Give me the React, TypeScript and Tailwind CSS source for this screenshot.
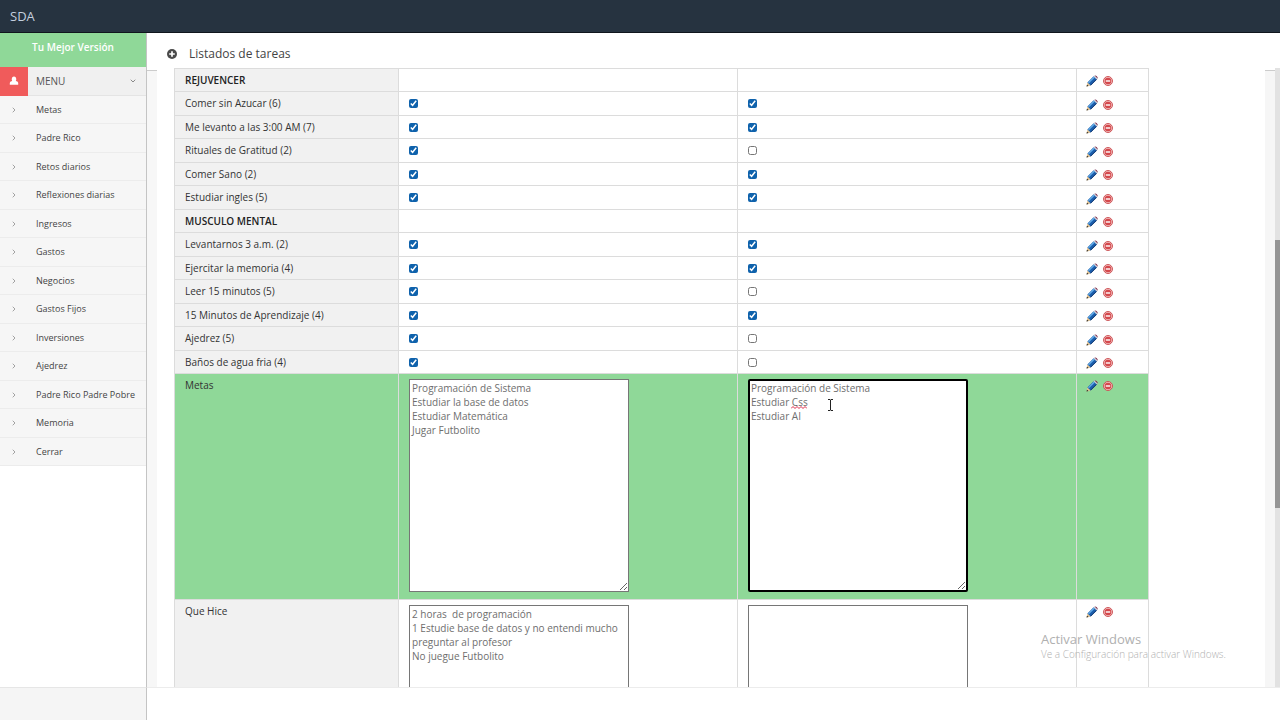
import React, { useState } from 'react';
import { ChevronDown, ChevronRight } from 'lucide-react';

interface Task {
  name: string;
  heading?: boolean;
  today?: boolean;
  tomorrow?: boolean;
}

const MENU_ITEMS = [
  'Metas',
  'Padre Rico',
  'Retos diarios',
  'Reflexiones diarias',
  'Ingresos',
  'Gastos',
  'Negocios',
  'Gastos Fijos',
  'Inversiones',
  'Ajedrez',
  'Padre Rico Padre Pobre',
  'Memoria',
  'Cerrar',
];

const TASKS: Task[] = [
  { name: 'REJUVENCER', heading: true },
  { name: 'Comer sin Azucar (6)', today: true, tomorrow: true },
  { name: 'Me levanto a las 3:00 AM (7)', today: true, tomorrow: true },
  { name: 'Rituales de Gratitud (2)', today: true, tomorrow: false },
  { name: 'Comer Sano (2)', today: true, tomorrow: true },
  { name: 'Estudiar ingles (5)', today: true, tomorrow: true },
  { name: 'MUSCULO MENTAL', heading: true },
  { name: 'Levantarnos 3 a.m. (2)', today: true, tomorrow: true },
  { name: 'Ejercitar la memoria (4)', today: true, tomorrow: true },
  { name: 'Leer 15 minutos (5)', today: true, tomorrow: false },
  { name: '15 Minutos de Aprendizaje (4)', today: true, tomorrow: true },
  { name: 'Ajedrez (5)', today: true, tomorrow: false },
  { name: 'Baños de agua fria (4)', today: true, tomorrow: false },
];

function PencilIcon() {
  return (
    <svg viewBox="0 0 12 12" className="w-3 h-3">
      <path d="M0.5 11.6 1.5 7.3 4.8 10.5Z" fill="#e3c391" />
      <path d="M0.5 11.6 1 9.7 2.5 11.1Z" fill="#222" />
      <path d="M1.4 7.4 7.6 1.2 10.9 4.4 4.7 10.6Z" fill="#1c5fae" />
      <path d="M2.5 7.8 8.3 2" stroke="#69b4ee" strokeWidth="1.1" />
      <path d="M4.5 10.3 10.6 4.2" stroke="#12356b" strokeWidth="1" />
      <path d="M7.6 1.2 8.5 0.4 11.7 3.6 10.9 4.4Z" fill="#c8ccd6" />
      <path d="M8.6 0.6C9.7 -0.3 12.6 2.4 11.5 3.6Z" fill="#7c2a48" />
    </svg>
  );
}

function RemoveIcon() {
  return (
    <svg viewBox="0 0 10 10" className="w-[10px] h-[10px]">
      <circle cx="5" cy="5" r="4.5" fill="#f4c4c4" stroke="#c8484c" strokeWidth="0.9" />
      <circle cx="5" cy="5" r="3.3" fill="#d4484c" />
      <rect x="2.8" y="4.3" width="4.4" height="1.4" fill="#fff" />
    </svg>
  );
}

function RowActions({ name }: { name: string }) {
  return (
    <div className="flex items-center gap-[5px] pl-[9px] pt-[2px] h-[22px]">
      <button type="button" aria-label={`Editar ${name}`}>
        <PencilIcon />
      </button>
      <button type="button" aria-label={`Eliminar ${name}`}>
        <RemoveIcon />
      </button>
    </div>
  );
}

function Check({ label, value }: { label: string; value: boolean }) {
  const [checked, setChecked] = useState(value);
  return (
    <input
      type="checkbox"
      aria-label={label}
      checked={checked}
      onChange={(e) => setChecked(e.target.checked)}
      className="block ml-[10px] w-[9px] h-[9px] accent-[#0f62ac]"
    />
  );
}

function Sidebar() {
  return (
    <aside className="w-[147px] shrink-0 flex flex-col border-r border-[#c4c4c4] bg-white">
      <div className="h-[34px] shrink-0 bg-[#8fd898] text-white text-[10px] leading-[28px] font-semibold text-center">
        Tu Mejor Versión
      </div>
      <button type="button" className="flex items-center h-[29px] shrink-0 bg-[#f0f0f0] border-b border-[#e4e4e4] text-[#555] text-[10px] text-left">
        <span className="w-7 h-[29px] bg-[#f05b5b] flex items-center justify-center">
          <svg viewBox="0 0 10 10" className="w-[10px] h-[10px]" fill="#fff">
            <ellipse cx="5" cy="3.2" rx="2.2" ry="2.7" />
            <path d="M0.8 8.8V7C0.8 5.8 2.2 5.2 3.2 5H6.8C7.8 5.2 9.2 5.8 9.2 7V8.8Z" />
          </svg>
        </span>
        <span className="flex-1 pl-2 pt-px">MENU</span>
        <ChevronDown className="w-2 h-2 mr-[9px]" />
      </button>
      <nav>
        <ul>
          {MENU_ITEMS.map((item) => (
            <li key={item} className="h-7 even:h-[29px] bg-[#f6f6f6] border-b border-[#ececec]">
              <a href="#" className="flex items-center h-full text-[9px] text-[#444]">
                <span className="w-7 flex justify-center">
                  <ChevronRight className="w-2 h-2 text-[#777]" />
                </span>
                <span className="pl-2 whitespace-nowrap">{item}</span>
              </a>
            </li>
          ))}
        </ul>
      </nav>
    </aside>
  );
}

function TaskTable() {
  const cell = 'border border-[#dcdcdc] p-0';
  const area = 'block ml-[10px] mt-[5px] w-[220px] h-[213px] bg-white text-[#6e6e6e] text-[10px] leading-[14px] resize';

  return (
    <table className="w-full table-fixed border-collapse text-[10px] leading-4 text-[#333]">
      <colgroup>
        <col className="w-[23%]" />
        <col className="w-[34.8%]" />
        <col className="w-[34.8%]" />
        <col />
      </colgroup>
      <tbody>
        {TASKS.map((task) => (
          <tr key={task.name} className="h-[23px] even:h-6">
            <th
              scope="row"
              className={`${cell} bg-[#f1f1f1] pl-[10px] pb-px text-left ${task.heading ? 'font-semibold text-[#222]' : 'font-normal'}`}
            >
              {task.name}
            </th>
            <td className={cell}>{!task.heading && <Check label={`${task.name} hoy`} value={!!task.today} />}</td>
            <td className={cell}>{!task.heading && <Check label={`${task.name} mañana`} value={!!task.tomorrow} />}</td>
            <td className={cell}>
              <RowActions name={task.name} />
            </td>
          </tr>
        ))}
        <tr className="h-[226px] bg-[#8fd898] align-top">
          <th scope="row" className={`${cell} border-[#c3e6c7] pl-[10px] pt-[3px] text-left font-normal`}>
            Metas
          </th>
          <td className={`${cell} border-[#c3e6c7]`}>
            <textarea
              aria-label="Metas hoy"
              className={`${area} border border-[#767676] px-[2px] pt-px`}
              defaultValue={'Programación de Sistema\nEstudiar la base de datos\nEstudiar Matemática\nJugar Futbolito'}
            />
          </td>
          <td className={`${cell} border-[#c3e6c7]`}>
            <div className="relative">
              <textarea
                aria-label="Metas mañana"
                spellCheck={false}
                className={`${area} border-2 border-black rounded-[2px] px-px`}
                defaultValue={'Programación de Sistema\nEstudiar Css\nEstudiar AI'}
              />
              <svg viewBox="0 0 16 3" className="absolute left-[53px] top-[27px] w-4 h-[3px]" fill="none" stroke="#dc2848">
                <path d="M0 2.5 2 0.5 4 2.5 6 0.5 8 2.5 10 0.5 12 2.5 14 0.5 16 2.5" />
              </svg>
              <svg viewBox="0 0 7 12" className="absolute left-[89px] top-5 w-[7px] h-3" fill="none" stroke="#222">
                <path d="M1 0.5H3L3.5 1 4 0.5H6M3.5 1V11M1 11.5H3L3.5 11 4 11.5H6" />
              </svg>
            </div>
          </td>
          <td className={`${cell} border-[#c3e6c7]`}>
            <RowActions name="Metas" />
          </td>
        </tr>
        <tr className="h-[226px] align-top">
          <th scope="row" className={`${cell} bg-[#f1f1f1] pl-[10px] pt-[3px] text-left font-normal`}>
            Que Hice
          </th>
          <td className={cell}>
            <textarea
              aria-label="Que Hice hoy"
              className={`${area} border border-[#767676] px-[2px] pt-px`}
              defaultValue={
                '2 horas  de programación\n1 Estudie base de datos y no entendi mucho preguntar al profesor\nNo juegue Futbolito'
              }
            />
          </td>
          <td className={cell}>
            <textarea aria-label="Que Hice mañana" className={`${area} border border-[#767676] px-[2px] pt-px`} />
          </td>
          <td className={cell}>
            <RowActions name="Que Hice" />
          </td>
        </tr>
      </tbody>
    </table>
  );
}

export default function App() {
  return (
    <div className="relative h-screen flex flex-col overflow-hidden bg-white font-['Open_Sans','Noto_Sans',sans-serif]">
      <header className="h-[33px] shrink-0 bg-[#263340] border-b border-[#10161d] px-[10px] pt-[2px] flex items-center text-[13px] text-[#c3cfdf]">
        SDA
      </header>

      <div className="flex flex-1 min-h-0">
        <Sidebar />
        <main className="flex-1 min-w-0 flex flex-col">
          <h1 className="h-[35px] shrink-0 flex items-center gap-3 pl-5 pt-[6px] text-[12px] text-[#444]">
            <svg viewBox="0 0 10 10" className="w-[10px] h-[10px]">
              <circle cx="5" cy="5" r="5" fill="#4a4a4a" />
              <path d="M5 2.2V7.8M2.2 5H7.8" stroke="#fff" strokeWidth="1.7" />
            </svg>
            Listados de tareas
          </h1>
          <div className="flex flex-1 min-h-0 overflow-hidden">
            <div className="w-[10px] shrink-0 mt-[2px] bg-[#f7f7f7] border-t border-[#ccc]" />
            <div className="flex-1 min-w-0 pl-[17px] pr-[116px]">
              <TaskTable />
            </div>
            <div className="w-[10px] shrink-0 mt-[2px] bg-[#f6f6f6] border-t border-[#ccc]" />
            <div className="w-[5px] shrink-0 bg-[#e2e2e2] flex flex-col">
              <div className="mt-[172px] h-[268px] bg-[#959595]" />
            </div>
          </div>
        </main>
      </div>

      <footer className="h-[33px] shrink-0 flex bg-white">
        <div className="w-[147px] bg-[#f5f5f5] border-r border-r-[#c4c4c4] border-t border-t-[#e6e6e6]" />
        <div className="flex-1 border-t border-[#ececec]" />
      </footer>

      {/* system watermark over the page */}
      <div className="absolute right-[55px] bottom-[59px] w-[184px] text-[#b0b0b0] pointer-events-none">
        <p className="text-[13px] leading-4">Activar Windows</p>
        <p className="text-[10px] leading-[14px] font-light whitespace-nowrap">Ve a Configuración para activar Windows.</p>
      </div>
    </div>
  );
}
